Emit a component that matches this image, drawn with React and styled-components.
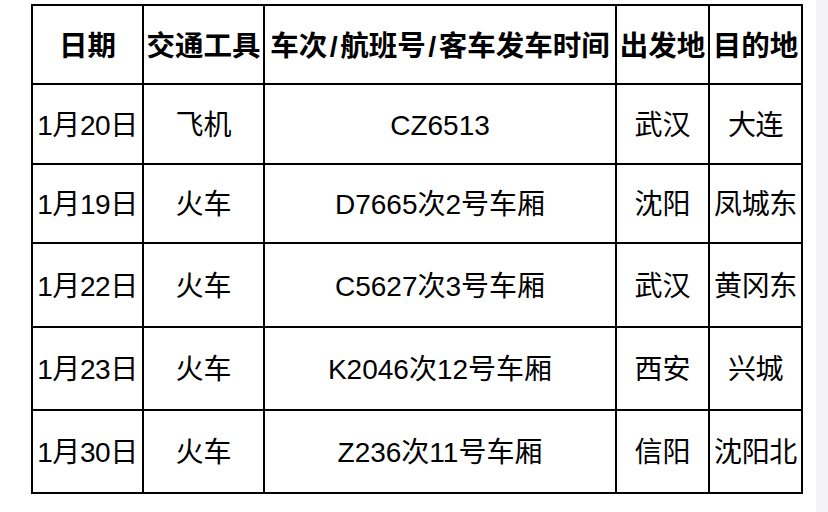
import React from "react";
import styled, { createGlobalStyle } from "styled-components";

const Global = createGlobalStyle`
  html, body { margin: 0; padding: 0; background: #fff; }
  body { font-family: "Liberation Sans", "Noto Sans CJK SC", sans-serif; }
`;

const Page = styled.div`
  display: flex;
  width: 828px;
  height: 512px;
  overflow: hidden;
`;

const Main = styled.div`
  width: 816px;
  padding: 4px 0 0 31px;
  box-sizing: border-box;
`;

const Strip = styled.div`
  flex: 1;
  background: #f4f4f6;
`;

const Grid = styled.div`
  display: grid;
  grid-template-columns: 109px 119px 350px 91px 91px;
  grid-template-rows: 77px 78px 77px 82px 81px 81px;
  gap: 2px;
  padding: 2px;
  background: #000;
  width: max-content;
`;

const Cell = styled.div`
  background: #fff;
  display: flex;
  align-items: center;
  justify-content: center;
  white-space: nowrap;
  overflow: visible;
  color: #000;
  font-family: "Liberation Sans", "Noto Sans CJK SC", sans-serif;
  font-size: ${(p) => (p.$head ? "28.5px" : "28px")};
  font-weight: ${(p) => (p.$head ? 700 : 400)};
  letter-spacing: ${(p) => (p.$tight ? "-0.4px" : "0")};
  line-height: 1;
  padding-top: 3px;
  box-sizing: border-box;
`;

const Slash = styled.span`
  margin: 0 2.5px;
`;

const headers = ["日期", "交通工具", "车次/航班号/客车发车时间", "出发地", "目的地"];
const rows = [
  ["1月20日", "飞机", "CZ6513", "武汉", "大连"],
  ["1月19日", "火车", "D7665次2号车厢", "沈阳", "凤城东"],
  ["1月22日", "火车", "C5627次3号车厢", "武汉", "黄冈东"],
  ["1月23日", "火车", "K2046次12号车厢", "西安", "兴城"],
  ["1月30日", "火车", "Z236次11号车厢", "信阳", "沈阳北"],
];

function withSlashes(text) {
  const parts = text.split("/");
  return parts.map((p, i) => (
    <React.Fragment key={i}>
      {i > 0 && <Slash>/</Slash>}
      {p}
    </React.Fragment>
  ));
}

export default function App() {
  return (
    <Page>
      <Global />
      <Main>
        <Grid>
          {headers.map((h, i) => (
            <Cell key={"h" + i} $head>
              {withSlashes(h)}
            </Cell>
          ))}
          {rows.map((r, ri) =>
            r.map((c, ci) => (
              <Cell key={ri + "-" + ci} $tight={ci === 0 || ci === 4}>
                {c}
              </Cell>
            ))
          )}
        </Grid>
      </Main>
      <Strip />
    </Page>
  );
}
